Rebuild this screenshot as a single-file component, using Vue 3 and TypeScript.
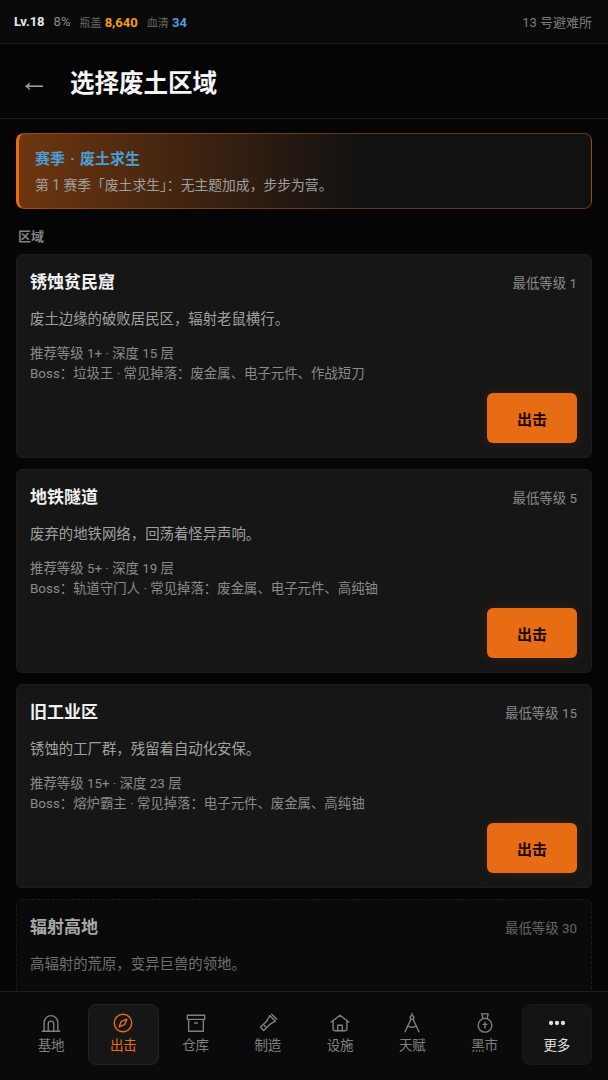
<template>
  <div class="page">
    <div class="topbar">
      <div class="stats">
        <span class="lv">Lv.18</span>
        <span class="pct">8%</span>
        <span class="res"><small>瓶盖</small> <b class="caps">8,640</b></span>
        <span class="res"><small>血清</small> <b class="serum">34</b></span>
      </div>
      <span class="shelter">13 号避难所</span>
    </div>

    <header class="head">
      <span class="back">←</span>
      <h1>选择废土区域</h1>
    </header>

    <main class="scroll">
      <section class="season">
        <div class="season-title">赛季 · 废土求生</div>
        <div class="season-desc">第 1 赛季「废土求生」：无主题加成，步步为营。</div>
      </section>

      <div class="label">区域</div>

      <article v-for="z in zones" :key="z.name" class="zone" :class="{ locked: z.locked }">
        <div class="zone-top">
          <h3>{{ z.name }}</h3>
          <span class="min">最低等级 {{ z.min }}</span>
        </div>
        <p class="desc">{{ z.desc }}</p>
        <template v-if="!z.locked">
          <p class="meta">推荐等级 {{ z.min }}+ · 深度 {{ z.depth }} 层<br />Boss：{{ z.boss }} · 常见掉落：{{ z.drops }}</p>
          <div class="actions"><button class="go">出击</button></div>
        </template>
      </article>
    </main>

    <nav class="nav">
      <div v-for="n in navs" :key="n.label" class="item" :class="n.cls">
        <svg viewBox="0 0 24 24" fill="none" stroke="currentColor" stroke-width="1.5" stroke-linecap="round" stroke-linejoin="round">
          <path v-for="d in n.paths" :key="d" :d="d" />
          <circle v-for="c in n.circles" :key="c[0]" :cx="c[0]" :cy="c[1]" :r="c[2]" :fill="c[3] ? 'currentColor' : 'none'" />
        </svg>
        <span>{{ n.label }}</span>
      </div>
    </nav>
  </div>
</template>

<script setup lang="ts">
interface Zone {
  name: string
  min: number
  desc: string
  depth?: number
  boss?: string
  drops?: string
  locked?: boolean
}

const zones: Zone[] = [
  { name: '锈蚀贫民窟', min: 1, desc: '废土边缘的破败居民区，辐射老鼠横行。', depth: 15, boss: '垃圾王', drops: '废金属、电子元件、作战短刀' },
  { name: '地铁隧道', min: 5, desc: '废弃的地铁网络，回荡着怪异声响。', depth: 19, boss: '轨道守门人', drops: '废金属、电子元件、高纯铀' },
  { name: '旧工业区', min: 15, desc: '锈蚀的工厂群，残留着自动化安保。', depth: 23, boss: '熔炉霸主', drops: '电子元件、废金属、高纯铀' },
  { name: '辐射高地', min: 30, desc: '高辐射的荒原，变异巨兽的领地。', locked: true }
]

interface NavItem {
  label: string
  cls?: string
  paths: string[]
  circles?: [number, number, number, boolean][]
}

const navs: NavItem[] = [
  { label: '基地', paths: ['M2.5 21h19', 'M4.5 21V11.5a7.5 7.5 0 0 1 15 0V21', 'M9 21v-8a3 3 0 0 1 6 0v8'] },
  { label: '出击', cls: 'active', paths: ['M16.2 7.8l-2.4 6-6 2.4 2.4-6z'], circles: [[12, 12, 9.5, false]] },
  { label: '仓库', paths: ['M2.5 3.5h19v4.5h-19z', 'M4 8v13h16V8', 'M10.5 12h3'] },
  { label: '制造', paths: ['M16 2.5l5.5 5.5', 'M14 4l6 6', 'M14 4l-3.3 5.7', 'M20 10l-5.7 3.3', 'M10.7 9.7l-7 7 3.6 3.6 7-7', 'M8 14.8l1.4 1.4'] },
  { label: '设施', paths: ['M2.5 11L12 3.5l9.5 7.5', 'M4.5 9.5V18a2.5 2.5 0 0 0 2.5 2.5h10a2.5 2.5 0 0 0 2.5-2.5V9.5', 'M9.5 20.5v-6h5v6'] },
  { label: '天赋', paths: ['M10.8 8L4.5 21.5', 'M13.2 8l6.3 13.5', 'M12 1.5v2.5', 'M7 15c3.2 2 6.8 2 10 0'], circles: [[12, 6, 2, false]] },
  { label: '黑市', paths: ['M8.5 2h7l-1.2 5', 'M8.5 2l1.2 5', 'M12 11.5v6', 'M10 13.5h4'], circles: [[12, 14.5, 7.5, false]] },
  { label: '更多', cls: 'more', paths: [], circles: [[5.5, 12, 1.6, true], [12, 12, 1.6, true], [18.5, 12, 1.6, true]] }
]
</script>

<style>
html, body { margin: 0; background: #050505; }
</style>

<style scoped>
.page {
  height: 1080px;
  display: flex;
  flex-direction: column;
  overflow: hidden;
  background: #050505;
  color: #e8e8e8;
  font-family: Roboto, "Noto Sans CJK SC", sans-serif;
}
.topbar {
  height: 43px;
  flex: none;
  display: flex;
  align-items: center;
  justify-content: space-between;
  padding: 0 16px 0 14px;
  background: #0a0a0a;
  border-bottom: 1px solid #1e1e1e;
  font-size: 13px;
}
.stats { display: flex; align-items: center; gap: 9px; }
.lv { color: #e8e8e8; font-weight: 700; }
.pct { color: #8a8a8a; }
.res small { color: #666; font-size: 11px; }
.res b { font-weight: 700; }
.caps { color: #f39c12; }
.serum { color: #4a9fd8; }
.shelter { color: #7c7c7c; font-size: 13px; }

.head {
  height: 74px;
  flex: none;
  display: flex;
  align-items: center;
  gap: 23px;
  padding: 0 22px 0 19px;
  border-bottom: 1px solid #1e1e1e;
}
.back {
  width: 28px;
  font-family: "Liberation Sans", sans-serif;
  font-size: 30px;
  line-height: 1;
  color: #a0a0a0;
}
h1 { margin: 0; font-size: 24.5px; font-weight: 700; color: #f5f5f5; }

.scroll {
  flex: 1;
  min-height: 0;
  overflow: hidden;
  padding: 14px 16px 0;
}
.season {
  height: 76px;
  box-sizing: border-box;
  padding: 14px 16px;
  border: 1px solid rgba(232, 108, 20, 0.4);
  border-left: 3px solid #e86c14;
  border-radius: 8px;
  background: linear-gradient(90deg, #6e3610, #111 60%);
}
.season-title { color: #4a9fd8; font-size: 15px; font-weight: 700; line-height: 22px; word-spacing: 1.5px; }
.season-desc { color: #a0a0a0; font-size: 13.8px; line-height: 22px; margin-top: 4px; }
.label { color: #808080; font-size: 13px; font-weight: 700; line-height: 16px; margin: 20px 2px 9px; }

.zone {
  height: 204px;
  box-sizing: border-box;
  margin-bottom: 11px;
  padding: 14px 14px 14px 13px;
  background: #161616;
  border: 1px solid #1c1c1c;
  border-radius: 6px;
}
.zone-top { display: flex; align-items: center; justify-content: space-between; }
h3 { margin: 0; font-size: 17px; font-weight: 700; color: #f0f0f0; line-height: 26px; }
.min { color: #8a8a8a; font-size: 13.4px; }
.desc { margin: 14px 0 0; color: #a0a0a0; font-size: 14.4px; line-height: 22px; }
.meta { margin: 13px 0 0; color: #8a8a8a; font-size: 13.4px; line-height: 20px; }
.actions { display: flex; justify-content: flex-end; margin-top: 9px; }
.go {
  width: 90px;
  height: 50px;
  border: none;
  border-radius: 6px;
  background: #e86c14;
  color: #1a0a00;
  font: 700 15px Roboto, "Noto Sans CJK SC", sans-serif;
  box-shadow: 0 0 12px rgba(232, 108, 20, 0.15);
}
.zone.locked {
  background: #0a0a0a;
  border: 1px dashed #1c1c1c;
}
.locked h3 { color: #a8a8a8; }
.locked .min { color: #666; }
.locked .desc { color: #707070; }

.nav {
  height: 89px;
  flex: none;
  box-sizing: border-box;
  display: grid;
  grid-template-columns: repeat(8, 1fr);
  gap: 2px;
  padding: 12px 16px 15px;
  background: #0a0a0a;
  border-top: 1px solid #1e1e1e;
}
.item {
  display: flex;
  flex-direction: column;
  align-items: center;
  justify-content: center;
  gap: 2px;
  padding-bottom: 3px;
  border: 1px solid transparent;
  border-radius: 8px;
  color: #808080;
  font-size: 13.5px;
  line-height: 18px;
}
.item svg { width: 22px; height: 22px; }
.active { color: #e86c14; background: #161616; border-color: #222; }
.more { color: #e0e0e0; background: #141414; border-color: #1a1a1a; }
</style>
